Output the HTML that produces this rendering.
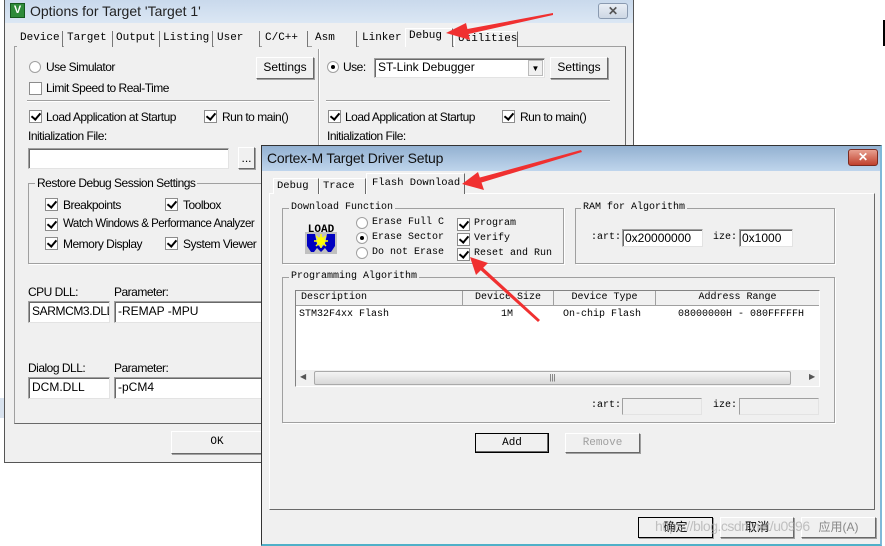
<!DOCTYPE html>
<html><head><meta charset="utf-8">
<style>
*{box-sizing:border-box;margin:0;padding:0}
body{width:885px;height:546px;overflow:hidden;background:#fff;position:relative;font-family:"Liberation Sans",sans-serif;font-size:12px;color:#000}
.a{position:absolute}
.s{font-family:"Liberation Sans",sans-serif;font-size:12px;white-space:nowrap;letter-spacing:-0.5px}
.m{font-family:"Liberation Mono","DejaVu Sans Mono",monospace;font-size:10px;white-space:nowrap}
.tab{position:absolute;height:16px;border:1px solid #a0a0a0;border-bottom:none;background:#f0f0f0;padding:1px 3px;font-family:"Liberation Mono",monospace;font-size:11px;white-space:nowrap;overflow:hidden}
.inp{position:absolute;background:#fff;border:1px solid #a0a0a0;border-right-color:#e3e3e3;border-bottom-color:#e3e3e3;box-shadow:inset 1px 1px 0 #696969;padding:2px 3px;font-size:12px;white-space:nowrap;overflow:hidden}
.btn{position:absolute;background:#f0f0f0;border:1px solid #fff;border-right-color:#696969;border-bottom-color:#696969;box-shadow:1px 1px 0 #a0a0a0;text-align:center;font-size:12px;white-space:nowrap}
.cb{position:absolute;width:13px;height:13px;background:#fff;border:1px solid #8c8c8c}
.cb.on::after{content:"";position:absolute;left:3px;top:0px;width:4px;height:7px;border:solid #000;border-width:0 2px 2px 0;transform:rotate(40deg)}
.rd{position:absolute;width:12px;height:12px;border-radius:50%;background:#fff;border:1px solid #a0a0a0}
.rd.on::after{content:"";position:absolute;left:3px;top:3px;width:4px;height:4px;border-radius:50%;background:#000}
.grp{position:absolute;border:1px solid #a0a0a0;box-shadow:1px 1px 0 #fff}
.gl{position:absolute;background:#f0f0f0;padding:0 2px;white-space:nowrap}
</style></head><body>

<!-- outer dialog -->
<div class="a" style="left:4px;top:0;width:630px;height:463px;background:#f0f0f0;border:1px solid #555;"></div>
<div class="a" style="left:5px;top:0;width:628px;height:23px;background:linear-gradient(#c9d9ec,#dbe7f4)"></div>
<div class="a" style="left:10px;top:3px;width:15px;height:15px;background:#2e8b3a;border:1px solid #145a1e;color:#fff;font-size:11px;font-weight:bold;line-height:13px;text-align:center">V</div>
<div class="a s" style="left:30px;top:3px;font-size:14px;color:#222;letter-spacing:0">Options for Target 'Target 1'</div>
<div class="a" style="left:598px;top:3px;width:30px;height:16px;border:1px solid #8a9ab0;border-radius:3px;background:linear-gradient(#e9eef5,#cdd7e4);text-align:center;font-size:12px;line-height:14px;color:#555;font-weight:bold">✕</div>

<!-- outer tabs -->
<div class="a" style="left:14px;top:46px;width:612px;height:378px;border:1px solid #a0a0a0;border-right-color:#696969;border-bottom-color:#696969;background:#f0f0f0"></div>
<div class="tab" style="left:17px;top:31px;width:46px;border:none;border-right:1px solid #777">Device</div>
<div class="tab" style="left:64px;top:31px;width:49px;border:none;border-right:1px solid #777">Target</div>
<div class="tab" style="left:113px;top:31px;width:47px;border:none;border-right:1px solid #777">Output</div>
<div class="tab" style="left:160px;top:31px;width:53px;border:none;border-right:1px solid #777">Listing</div>
<div class="tab" style="left:214px;top:31px;width:46px;border:none;border-right:1px solid #777">User</div>
<div class="tab" style="left:262px;top:31px;width:46px;border:none;border-right:1px solid #777">C/C++</div>
<div class="tab" style="left:312px;top:31px;width:45px;border:none;border-right:1px solid #777">Asm</div>
<div class="tab" style="left:359px;top:31px;width:46px;border:none">Linker</div>
<div class="tab" style="left:405px;top:28px;width:48px;height:19px;border-color:#fff;border-right-color:#696969">Debug</div>
<div class="tab" style="left:454px;top:31px;width:64px;border-color:#fff;border-right-color:#696969">Utilities</div>

<div class="rd" style="left:29px;top:61px"></div>
<div class="a s" style="left:46px;top:60px">Use Simulator</div>
<div class="btn" style="left:256px;top:57px;width:58px;height:22px;line-height:19px">Settings</div>
<div class="cb" style="left:29px;top:82px"></div>
<div class="a s" style="left:46px;top:81px">Limit Speed to Real-Time</div>
<div class="a" style="left:318px;top:49px;width:1px;height:100px;background:#a0a0a0;box-shadow:1px 0 0 #fff"></div>
<div class="rd on" style="left:327px;top:61px"></div>
<div class="a s" style="left:343px;top:60px">Use:</div>
<div class="inp" style="left:374px;top:58px;width:171px;height:20px;padding:1px 3px">ST-Link Debugger</div>
<div class="a" style="left:528px;top:60px;width:15px;height:16px;background:#f0f0f0;border:1px solid #bbb;font-size:8px;text-align:center;line-height:15px">▼</div>
<div class="btn" style="left:550px;top:57px;width:58px;height:22px;line-height:19px">Settings</div>
<div class="a" style="left:27px;top:100px;width:287px;height:1px;background:#a0a0a0;box-shadow:0 1px 0 #fff"></div>
<div class="a" style="left:326px;top:100px;width:284px;height:1px;background:#a0a0a0;box-shadow:0 1px 0 #fff"></div>
<div class="cb on" style="left:29px;top:110px"></div>
<div class="a s" style="left:46px;top:110px">Load Application at Startup</div>
<div class="cb on" style="left:204px;top:110px"></div>
<div class="a s" style="left:222px;top:110px">Run to main()</div>
<div class="cb on" style="left:328px;top:110px"></div>
<div class="a s" style="left:345px;top:110px">Load Application at Startup</div>
<div class="cb on" style="left:502px;top:110px"></div>
<div class="a s" style="left:520px;top:110px">Run to main()</div>
<div class="a s" style="left:28px;top:129px">Initialization File:</div>
<div class="a s" style="left:327px;top:129px">Initialization File:</div>
<div class="inp" style="left:28px;top:148px;width:201px;height:21px"></div>
<div class="btn" style="left:238px;top:147px;width:17px;height:22px;line-height:20px">...</div>

<div class="grp" style="left:28px;top:183px;width:240px;height:81px"></div>
<div class="gl s" style="left:35px;top:176px">Restore Debug Session Settings</div>
<div class="cb on" style="left:45px;top:198px"></div><div class="a s" style="left:63px;top:198px">Breakpoints</div>
<div class="cb on" style="left:165px;top:198px"></div><div class="a s" style="left:183px;top:198px">Toolbox</div>
<div class="cb on" style="left:45px;top:218px"></div><div class="a s" style="left:63px;top:218px;font-size:11.5px">Watch Windows &amp; Performance Analyzer</div>
<div class="cb on" style="left:45px;top:237px"></div><div class="a s" style="left:63px;top:237px">Memory Display</div>
<div class="cb on" style="left:165px;top:237px"></div><div class="a s" style="left:183px;top:237px">System Viewer</div>

<div class="a s" style="left:28px;top:285px">CPU DLL:</div>
<div class="a s" style="left:114px;top:285px">Parameter:</div>
<div class="inp" style="left:28px;top:301px;width:82px;height:22px;letter-spacing:-0.4px">SARMCM3.DLL</div>
<div class="inp" style="left:114px;top:301px;width:150px;height:22px">-REMAP -MPU</div>
<div class="a s" style="left:28px;top:361px">Dialog DLL:</div>
<div class="a s" style="left:114px;top:361px">Parameter:</div>
<div class="inp" style="left:28px;top:377px;width:82px;height:22px">DCM.DLL</div>
<div class="inp" style="left:114px;top:377px;width:150px;height:22px">-pCM4</div>
<div class="a" style="left:0;top:398px;width:4px;height:20px;background:#d8e2ee"></div>
<div class="btn" style="left:171px;top:431px;width:92px;height:23px;line-height:21px;font-family:'Liberation Mono',monospace;font-size:11px">OK</div>
<div class="a" style="left:883px;top:20px;width:2px;height:26px;background:#000"></div>

<!-- inner dialog -->
<div class="a" style="left:261px;top:145px;width:621px;height:401px;background:#f0f0f0;border:1px solid #333;border-bottom:2px solid #4fb0c8;border-right:2px solid #7fb8d8"></div>
<div class="a" style="left:262px;top:146px;width:618px;height:25px;background:linear-gradient(#93b1d1,#bfd5ec)"></div>
<div class="a s" style="left:267px;top:150px;font-size:14px;color:#111;letter-spacing:-0.2px">Cortex-M Target Driver Setup</div>
<div class="a" style="left:848px;top:149px;width:30px;height:17px;border:1px solid #7a2a20;border-radius:3px;background:linear-gradient(#e8a090,#c0402c);color:#fff;font-weight:bold;text-align:center;font-size:12px;line-height:15px">✕</div>

<div class="a" style="left:269px;top:193px;width:606px;height:317px;border:1px solid #fff;border-right-color:#696969;border-bottom-color:#696969"></div>
<div class="tab" style="left:273px;top:178px;width:46px;border-color:#fff;border-right-color:#696969;font-size:10.5px">Debug</div>
<div class="tab" style="left:319px;top:178px;width:47px;border-color:#fff;border-right-color:#696969;font-size:10.5px">Trace</div>
<div class="tab" style="left:366px;top:173px;width:99px;height:21px;border-color:#fff;border-right-color:#696969;padding:3px 2px 0 5px;font-size:10.5px">Flash Download</div>

<div class="grp" style="left:282px;top:208px;width:282px;height:56px"></div>
<div class="gl m" style="left:289px;top:202px">Download Function</div>
<svg class="a" style="left:305px;top:222px" width="32" height="32" viewBox="0 0 32 32">
<rect x="0" y="10" width="32" height="22" fill="#c0c0c0"/>
<text x="16" y="10" font-family="Liberation Mono,monospace" font-size="11" font-weight="bold" text-anchor="middle">LOAD</text>
<path d="M2 12h8l2 10 4 4 4-4 2-10h8v12l-4 6h-3l-3-4-4 4-4-4-3 4H6l-4-6z" fill="#0000c0"/>
<circle cx="16" cy="19" r="4" fill="#ffff00"/><path d="M16 12v14M9 19h14M11 14l10 10M21 14L11 24" stroke="#ffff00" stroke-width="1.5"/>
</svg>
<div class="rd" style="left:356px;top:217px"></div><div class="a m" style="left:372px;top:217px">Erase Full C</div>
<div class="rd on" style="left:356px;top:232px"></div><div class="a m" style="left:372px;top:232px">Erase Sector</div>
<div class="rd" style="left:356px;top:247px"></div><div class="a m" style="left:372px;top:247px">Do not Erase</div>
<div class="cb on" style="left:457px;top:218px"></div><div class="a m" style="left:474px;top:218px">Program</div>
<div class="cb on" style="left:457px;top:233px"></div><div class="a m" style="left:474px;top:233px">Verify</div>
<div class="cb on" style="left:457px;top:248px"></div><div class="a m" style="left:474px;top:248px">Reset and Run</div>

<div class="grp" style="left:575px;top:208px;width:260px;height:56px"></div>
<div class="gl m" style="left:581px;top:202px">RAM for Algorithm</div>
<div class="a m" style="left:591px;top:232px">:art:</div>
<div class="inp" style="left:622px;top:229px;width:81px;height:18px;padding:1px 2px;font-size:12px">0x20000000</div>
<div class="a m" style="left:713px;top:232px">ize:</div>
<div class="inp" style="left:739px;top:229px;width:54px;height:18px;padding:1px 2px;font-size:12px">0x1000</div>

<div class="grp" style="left:282px;top:277px;width:553px;height:146px"></div>
<div class="gl m" style="left:289px;top:271px">Programming Algorithm</div>
<div class="a" style="left:295px;top:290px;width:525px;height:97px;background:#fff;border:1px solid #828282;border-right-color:#fff;border-bottom-color:#fff"></div>
<div class="a m" style="left:296px;top:291px;width:167px;height:15px;background:#f0f0f0;border-right:1px solid #a0a0a0;border-bottom:1px solid #a0a0a0;padding-left:5px;line-height:14px">Description</div>
<div class="a m" style="left:463px;top:291px;width:91px;height:15px;background:#f0f0f0;border-right:1px solid #a0a0a0;border-bottom:1px solid #a0a0a0;text-align:center;line-height:14px">Device Size</div>
<div class="a m" style="left:554px;top:291px;width:102px;height:15px;background:#f0f0f0;border-right:1px solid #a0a0a0;border-bottom:1px solid #a0a0a0;text-align:center;line-height:14px">Device Type</div>
<div class="a m" style="left:656px;top:291px;width:163px;height:15px;background:#f0f0f0;border-bottom:1px solid #a0a0a0;text-align:center;line-height:14px">Address Range</div>
<div class="a m" style="left:299px;top:309px">STM32F4xx Flash</div>
<div class="a m" style="left:501px;top:309px">1M</div>
<div class="a m" style="left:563px;top:309px">On-chip Flash</div>
<div class="a m" style="left:678px;top:309px">08000000H - 080FFFFFH</div>
<div class="a" style="left:296px;top:370px;width:523px;height:16px;background:#f0f0f0"></div>
<div class="a" style="left:314px;top:371px;width:477px;height:14px;background:linear-gradient(#f4f4f4,#d8d8d8);border:1px solid #aaa;border-radius:2px;text-align:center;font-size:8px;line-height:12px;color:#555">|||</div>
<div class="a" style="left:300px;top:372px;font-size:8px;color:#555">◀</div>
<div class="a" style="left:809px;top:372px;font-size:8px;color:#555">▶</div>
<div class="a m" style="left:591px;top:400px">:art:</div>
<div class="inp" style="left:622px;top:398px;width:80px;height:17px;background:#f0f0f0;box-shadow:none"></div>
<div class="a m" style="left:713px;top:400px">ize:</div>
<div class="inp" style="left:739px;top:398px;width:80px;height:17px;background:#f0f0f0;box-shadow:none"></div>

<div class="btn m" style="left:475px;top:433px;width:74px;height:20px;line-height:18px;border:1px solid #000;box-shadow:inset -1px -1px 0 #696969;font-size:11px">Add</div>
<div class="btn m" style="left:565px;top:433px;width:75px;height:20px;line-height:18px;color:#a0a0a0;font-size:11px">Remove</div>

<div class="btn" style="left:638px;top:517px;width:75px;height:21px;line-height:19px;border:1px solid #000;font-family:'Liberation Sans','Noto Sans CJK SC',sans-serif">确定</div>
<div class="btn" style="left:720px;top:517px;width:74px;height:21px;line-height:19px;font-family:'Liberation Sans','Noto Sans CJK SC',sans-serif">取消</div>
<div class="btn" style="left:801px;top:517px;width:75px;height:21px;line-height:19px;color:#888;font-family:'Liberation Sans','Noto Sans CJK SC',sans-serif">应用(A)</div>
<div class="a s" style="left:655px;top:518px;font-size:14px;color:rgba(170,170,170,0.7)">https://blog.csdn.net/u0996</div>

<!-- arrows -->
<svg class="a" style="left:0;top:0" width="885" height="546">
<g fill="#f03030">
<path d="M553 13L462 30L464 35L553 15Z"/><path d="M446 33L466 23L470 40Z"/>
<path d="M581 150L478 178L480 183L582 152Z"/><path d="M462 184L478 172L484 190Z"/>
<path d="M538 322L476 266L479 264L540 320Z"/><path d="M470 257L488 263L476 275Z"/>
</g></svg>
</body></html>
